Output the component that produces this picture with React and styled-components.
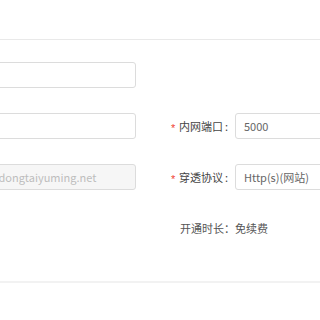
import React from "react";
import styled, { createGlobalStyle } from "styled-components";

const Global = createGlobalStyle`
  html, body { margin: 0; padding: 0; background: #fff; overflow: hidden; }
  body { font-family: "Noto Sans CJK SC", "Noto Sans", sans-serif; font-size: 11px; color: #444; }
`;

const Page = styled.div`
  width: 320px;
  height: 320px;
  overflow: hidden;
`;

const Header = styled.div`
  height: 39px;
  border-bottom: 1px solid #e9e9e9;
`;

const Form = styled.div`
  display: grid;
  grid-template-columns: 164px 1fr;
  column-gap: 30px;
  row-gap: 25px;
  margin-left: -28px;
  padding-top: 22px;
  padding-bottom: 40px;
  border-bottom: 2px solid #f2f2f2;
  width: 460px;
`;

const Input = styled.div`
  box-sizing: border-box;
  height: 26px;
  border: 1px solid #dcdcdc;
  border-radius: 3px;
  padding: 0 8px;
  display: flex;
  align-items: center;
  white-space: nowrap;
  overflow: hidden;
  color: ${(p) => (p.$disabled ? "#bdbdbd" : "#666")};
  background: ${(p) => (p.$disabled ? "#f6f6f6" : "#fff")};
  font-size: 11px;
`;

const Field = styled.div`
  display: flex;
  align-items: center;
  height: 26px;
  padding-left: ${(p) => p.$indent || 0}px;
`;

const Label = styled.div`
  width: 69px;
  flex: none;
  display: flex;
  align-items: center;
  color: #444;
  font-size: 11px;
  white-space: nowrap;
`;

const Star = styled.span`
  color: #f04134;
  font-family: "Liberation Sans", sans-serif;
  font-size: 11px;
  width: 8px;
  margin-left: 5px;
  position: relative;
  top: 2px;
`;

const Colon = styled.span`
  margin-left: 2px;
`;

const RightInput = styled(Input)`
  flex: 1;
`;

const Note = styled.div`
  color: #555;
  font-size: 11px;
  white-space: nowrap;
`;

const Empty = styled.div``;

export default function App() {
  return (
    <Page>
      <Global />
      <Header />
      <Form>
        <Input />
        <Empty />
        <Input />
        <Field>
          <Label>
            <Star>*</Star>内网端口<Colon>:</Colon>
          </Label>
          <RightInput>5000</RightInput>
        </Field>
        <Input $disabled>frp.dongtaiyuming.net</Input>
        <Field>
          <Label>
            <Star>*</Star>穿透协议<Colon>:</Colon>
          </Label>
          <RightInput>Http(s)(网站)</RightInput>
        </Field>
        <Empty />
        <Field $indent={14}>
          <Note>开通时长：免续费</Note>
        </Field>
      </Form>
    </Page>
  );
}
